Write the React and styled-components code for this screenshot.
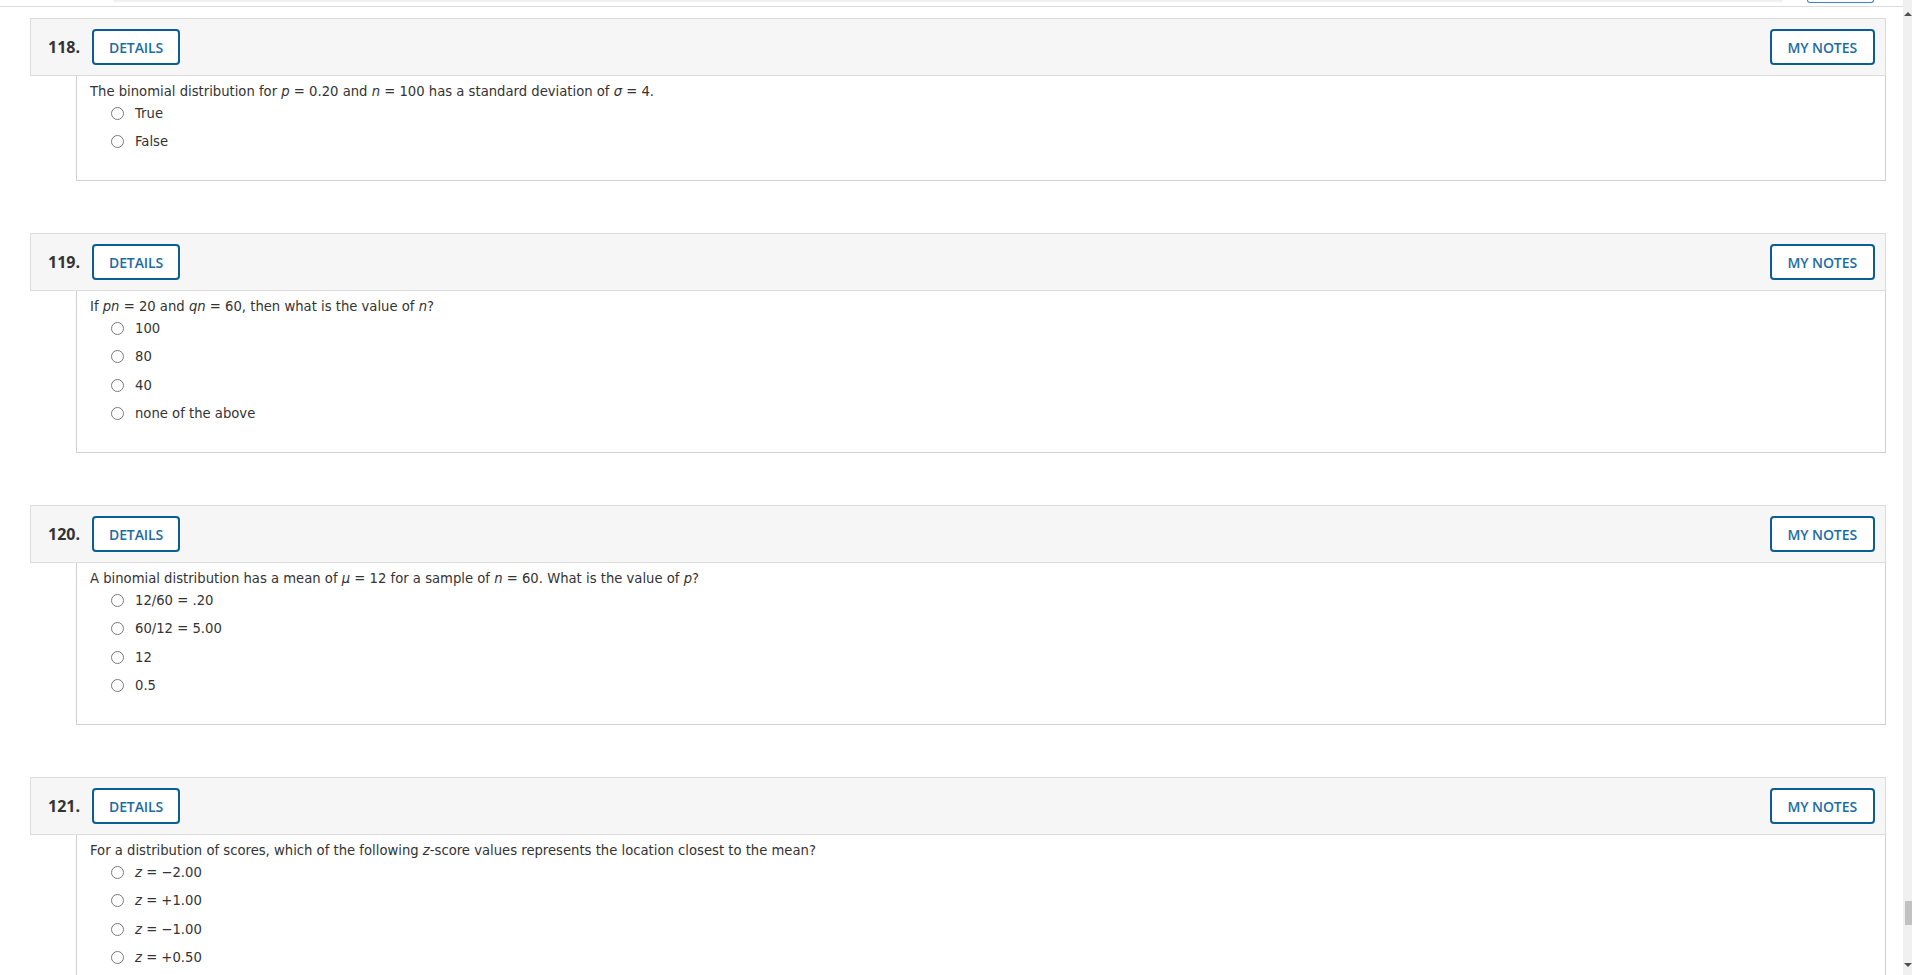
import styled, { createGlobalStyle } from "styled-components";

const GlobalStyle = createGlobalStyle`
  html, body {
    margin: 0;
    padding: 0;
    background: #fff;
    overflow: hidden;
  }
  body {
    font-family: "DejaVu Sans", Verdana, sans-serif;
    color: #333;
  }
`;

const Page = styled.div`
  display: flex;
  height: 975px;
  overflow: hidden;
`;

const Main = styled.div`
  flex: 1;
  display: flex;
  flex-direction: column;
  min-width: 0;
`;

const TopBar = styled.div`
  height: 6px;
  border-bottom: 1px solid #dcdcdc;
  display: flex;
  align-items: flex-start;
  flex-shrink: 0;
`;

const GreyTab = styled.div`
  margin-left: 113px;
  width: 1670px;
  height: 2px;
  background: #f1f1f1;
  border-radius: 0 0 6px 6px;
`;

const BlueTab = styled.div`
  margin-left: 24px;
  width: 65px;
  height: 2px;
  border: 1px solid #3b7fd0;
  border-top: none;
  border-radius: 0 0 6px 6px;
`;

const List = styled.div`
  display: flex;
  flex-direction: column;
  gap: 52px;
  padding: 11px 17px 0 30px;
`;

const Question = styled.section`
  display: flex;
  flex-direction: column;
`;

const Header = styled.div`
  box-sizing: border-box;
  height: 58px;
  display: flex;
  align-items: center;
  justify-content: space-between;
  background: #f6f6f6;
  border: 1px solid #dcdcdc;
  padding: 0 10px 0 17px;
`;

const HeaderLeft = styled.div`
  display: flex;
  align-items: center;
`;

const Number = styled.span`
  width: 44px;
  font-family: "Open Sans", "Liberation Sans", sans-serif;
  font-weight: 700;
  font-size: 16px;
  color: #333;
`;

const OutlineButton = styled.button`
  box-sizing: border-box;
  height: 36px;
  padding: 0 ${(p) => p.$pad || 15}px;
  background: #fff;
  border: 2px solid #0b5e95;
  border-radius: 4px;
  color: #1c6ca3;
  font-family: "Open Sans", "Liberation Sans", sans-serif;
  font-weight: 600;
  font-size: 14px;
  letter-spacing: -0.1px;
  cursor: pointer;
`;

const Body = styled.div`
  margin-left: 46px;
  border: 1px solid #cfcfcf;
  border-top: none;
  padding: 6px 13px 21px;
  font-size: 13.2px;
  color: #333;
`;

const Prompt = styled.div`
  line-height: 20px;
`;

const Var = styled.i`
  font-style: italic;
`;

const Options = styled.ul`
  list-style: none;
  margin: 0;
  padding: 0 0 0 21px;
`;

const Option = styled.li`
  display: flex;
  align-items: center;
  height: 22px;
  margin-bottom: 6.5px;
`;

const Radio = styled.span`
  box-sizing: border-box;
  width: 13px;
  height: 13px;
  border: 1px solid #7a7a7a;
  border-radius: 50%;
  background: #fff;
  margin-right: 11px;
  flex-shrink: 0;
`;

const ScrollTrack = styled.div`
  width: 9px;
  background: #f0f0f0;
  display: flex;
  flex-direction: column;
  align-items: flex-end;
  flex-shrink: 0;
`;

const ArrowUp = styled.div`
  margin-top: 12px;
  width: 0;
  height: 0;
  border-left: 4px solid transparent;
  border-right: 4px solid transparent;
  border-bottom: 4px solid #505050;
`;

const ArrowDown = styled.div`
  margin: 0 0 8px;
  width: 0;
  height: 0;
  border-left: 4px solid transparent;
  border-right: 4px solid transparent;
  border-top: 4px solid #505050;
`;

const Spacer = styled.div`
  flex: 1;
`;

const Thumb = styled.div`
  width: 7px;
  height: 24px;
  background: #c1c1c1;
  margin-bottom: 38px;
`;

const questions = [
  {
    num: 118,
    prompt: (
      <>
        The binomial distribution for <Var>p</Var> = 0.20 and <Var>n</Var> = 100 has a standard deviation of <Var>σ</Var> = 4.
      </>
    ),
    options: ["True", "False"],
  },
  {
    num: 119,
    prompt: (
      <>
        If <Var>pn</Var> = 20 and <Var>qn</Var> = 60, then what is the value of <Var>n</Var>?
      </>
    ),
    options: ["100", "80", "40", "none of the above"],
  },
  {
    num: 120,
    prompt: (
      <>
        A binomial distribution has a mean of <Var>μ</Var> = 12 for a sample of <Var>n</Var> = 60. What is the value of <Var>p</Var>?
      </>
    ),
    options: ["12/60 = .20", "60/12 = 5.00", "12", "0.5"],
  },
  {
    num: 121,
    prompt: (
      <>
        For a distribution of scores, which of the following <Var>z</Var>-score values represents the location closest to the mean?
      </>
    ),
    options: [
      <><Var>z</Var> = −2.00</>,
      <><Var>z</Var> = +1.00</>,
      <><Var>z</Var> = −1.00</>,
      <><Var>z</Var> = +0.50</>,
    ],
  },
];

function QuestionCard({ q }) {
  return (
    <Question>
      <Header>
        <HeaderLeft>
          <Number>{q.num}.</Number>
          <OutlineButton>DETAILS</OutlineButton>
        </HeaderLeft>
        <OutlineButton $pad={16}>MY NOTES</OutlineButton>
      </Header>
      <Body>
        <Prompt>{q.prompt}</Prompt>
        <Options>
          {q.options.map((o, i) => (
            <Option key={i}>
              <Radio />
              <span>{o}</span>
            </Option>
          ))}
        </Options>
      </Body>
    </Question>
  );
}

export default function App() {
  return (
    <>
      <GlobalStyle />
      <Page>
        <Main>
          <TopBar>
            <GreyTab />
            <BlueTab />
          </TopBar>
          <List>
            {questions.map((q) => (
              <QuestionCard key={q.num} q={q} />
            ))}
          </List>
        </Main>
        <ScrollTrack>
          <ArrowUp />
          <Spacer />
          <Thumb />
          <ArrowDown />
        </ScrollTrack>
      </Page>
    </>
  );
}
